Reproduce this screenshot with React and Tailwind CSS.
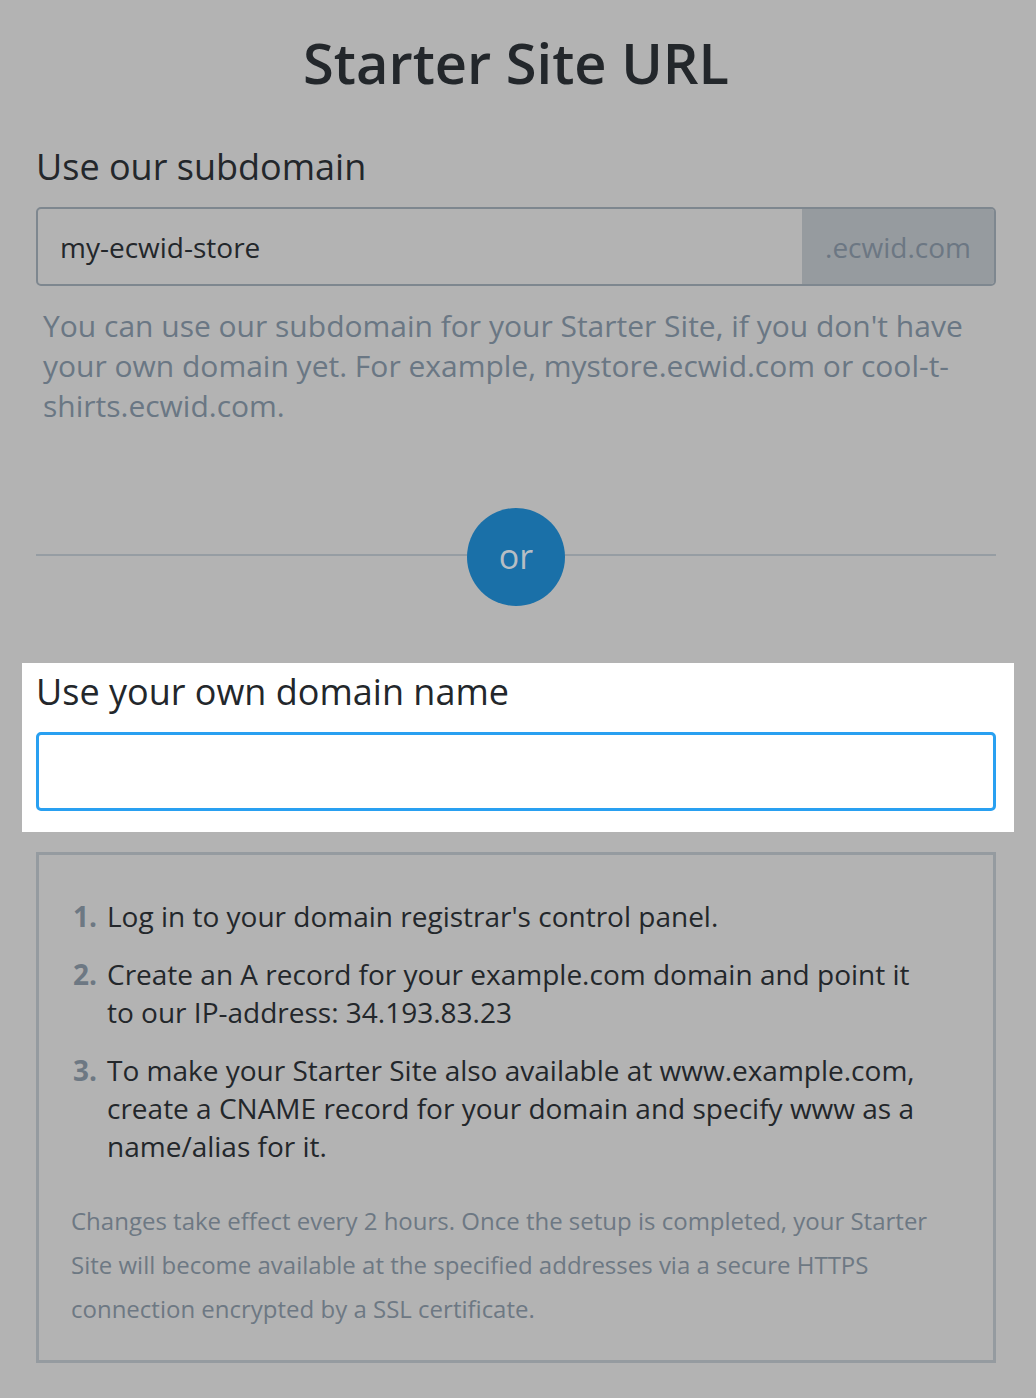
import React from 'react'

const steps = [
  "Log in to your domain registrar's control panel.",
  'Create an A record for your example.com domain and point it to our IP-address: 34.193.83.23',
  'To make your Starter Site also available at www.example.com, create a CNAME record for your domain and specify www as a name/alias for it.',
]

export default function App() {
  return (
    <div className="min-h-[1398px] bg-[#b3b3b3] text-[#23272b]" style={{ fontFamily: '"Open Sans", "Noto Sans", sans-serif' }}>
      <div className="pl-[36px] pr-[40px] pt-[24px]">
        <h1 className="text-center text-[56px] font-semibold leading-[76px] text-[#23272b]">Starter Site URL</h1>

        {/* subdomain */}
        <div className="mt-[42px]">
          <div className="text-[36px] leading-[50px]">Use our subdomain</div>
          <div className="mt-[15px] flex h-[79px] overflow-hidden rounded-[5px] border-2 border-[#7e878f]">
            <div className="flex flex-1 items-center pl-[22px] text-[28px]">my-ecwid-store</div>
            <div className="flex w-[192px] items-center justify-center bg-[#969b9f] text-[28px] text-[#6c7783]">.ecwid.com</div>
          </div>
          <p className="mt-[20px] pl-[7px] text-[30px] leading-[40px] text-[#6a7784]">
            You can use our subdomain for your Starter Site, if you don't have your own domain yet. For example, mystore.ecwid.com or cool-t-shirts.ecwid.com.
          </p>
        </div>

        {/* divider */}
        <div className="relative mt-[82px] flex h-[98px] items-center justify-center">
          <div className="absolute inset-x-0 top-[46px] h-[2px] bg-[#969da3]" />
          <div className="relative flex h-[98px] w-[98px] items-center justify-center rounded-full bg-[#1a70a8] pb-[2px] text-[34px] text-[#b7bec4]">or</div>
        </div>
      </div>

      {/* own domain */}
      <div className="mx-[22px] mt-[57px] bg-white pb-[21px] pl-[14px] pr-[18px] pt-[4px]">
        <div className="text-[36px] leading-[50px]">Use your own domain name</div>
        <div className="mt-[15px] h-[79px] rounded-[5px] border-[3px] border-[#29a0f1] bg-white" />
      </div>

      <div className="ml-[36px] mr-[40px] mt-[20px] border-[3px] border-[#959ba0] pb-[29px] pl-[34px] pr-[40px] pt-[42px]">
        <ol className="flex flex-col gap-[20px] pr-[28px]">
          {steps.map((s, i) => (
            <li key={i} className="flex text-[28px] leading-[38px]">
              <span className="w-[34px] shrink-0 font-bold text-[#6d7883]">{i + 1}.</span>
              <span>{s}</span>
            </li>
          ))}
        </ol>
        <p className="-ml-[2px] mt-[34px] text-[24px] leading-[44px] text-[#6d7883]">
          Changes take effect every 2 hours. Once the setup is completed, your Starter Site will become available at the specified addresses via a secure HTTPS connection encrypted by a SSL certificate.
        </p>
      </div>
    </div>
  )
}
